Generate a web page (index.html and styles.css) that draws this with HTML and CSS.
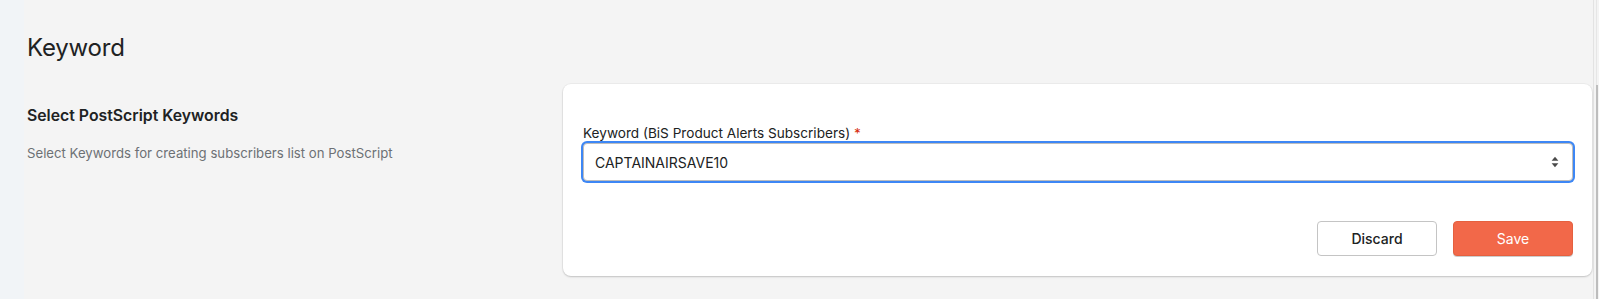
FILE: index.html
```html
<!doctype html>
<html>

<head>
  <meta charset="UTF-8" />
  <title>Keyword settings</title>
  <link rel="stylesheet" href="styles.css">
</head>

<body>
  <div class="app">
    <div class="side-strip"></div>

    <main class="page">
      <h1 class="page-title">Keyword</h1>

      <section class="annotated">
        <div class="annotation">
          <h2 class="annotation-title">Select PostScript Keywords</h2>
          <p class="annotation-text">Select Keywords for creating subscribers list on PostScript</p>
        </div>

        <div class="card">
          <label class="field-label" for="keyword">Keyword (BiS Product Alerts Subscribers) <span class="required">*</span></label>
          <div class="select-wrap">
            <select id="keyword" class="select">
              <option>CAPTAINAIRSAVE10</option>
            </select>
            <svg class="select-arrows" viewBox="0 0 8 12" xmlns="http://www.w3.org/2000/svg">
              <path d="M4,0.8L7.4,4.8H0.6Z" fill="#4A4A4A" />
              <path d="M4,11.2L7.4,7.2H0.6Z" fill="#4A4A4A" />
            </svg>
          </div>

          <div class="actions">
            <button class="btn btn-secondary" type="button">Discard</button>
            <button class="btn btn-primary" type="button">Save</button>
          </div>
        </div>
      </section>
    </main>

    <div class="scroll-gutter">
      <div class="gutter-top"></div>
      <div class="gutter-thumb"></div>
    </div>
  </div>
</body>

</html>
```

FILE: styles.css
```css
html,
body {
  margin: 0;
  padding: 0;
  height: 100%;
}

body {
  background-color: #F4F4F4;
  font-family: Inter, "Noto Sans", "Liberation Sans", sans-serif;
  color: #202223;
  overflow: hidden;
}

.app {
  display: flex;
  height: 299px;
}

.side-strip {
  width: 24px;
  flex: none;
  background-color: #F1F4F7;
}

.page {
  flex: 1;
  padding: 32px 1px 0 3px;
  border-right: 1px solid #E3E3E3;
}

.page-title {
  margin: 0 0 20px 0;
  font-size: 24px;
  line-height: 32px;
  font-weight: 400;
  letter-spacing: -0.2px;
  color: #202223;
}

.annotated {
  display: flex;
  align-items: flex-start;
}

.annotation {
  width: 536px;
  flex: none;
  padding-top: 22px;
}

.annotation-title {
  margin: 0;
  font-size: 15.8px;
  line-height: 20px;
  font-weight: 600;
  color: #202223;
}

.annotation-text {
  margin: 17px 0 0 0;
  font-size: 13.2px;
  line-height: 20px;
  color: #6D7175;
}

.card {
  flex: 1;
  background-color: #FFFFFF;
  border-radius: 8px;
  box-shadow: 0 1px 2px rgba(0, 0, 0, 0.18), 0 0 0 1px rgba(0, 0, 0, 0.03);
  padding: 39px 19px 20px 20px;
}

.field-label {
  display: block;
  font-size: 13.6px;
  line-height: 20px;
  color: #202223;
}

.required {
  color: #D72C0D;
}

.select-wrap {
  position: relative;
}

.select {
  display: block;
  width: 100%;
  height: 38px;
  box-sizing: border-box;
  appearance: none;
  -webkit-appearance: none;
  background-color: #FFFFFF;
  border: 1px solid #BDBDBD;
  border-radius: 4px;
  box-shadow: 0 0 0 2px #3D87F5;
  padding: 0 36px 0 11px;
  font-family: inherit;
  font-size: 14px;
  color: #202223;
  outline: none;
}

.select-arrows {
  position: absolute;
  right: 14px;
  top: 13px;
  width: 8px;
  height: 12px;
  pointer-events: none;
}

.actions {
  display: flex;
  justify-content: flex-end;
  gap: 16px;
  margin-top: 40px;
}

.btn {
  width: 120px;
  height: 35px;
  border-radius: 4px;
  font-family: inherit;
  font-size: 14px;
  font-weight: 500;
  cursor: pointer;
}

.btn-secondary {
  background-color: #FFFFFF;
  border: 1px solid #C4C4C4;
  color: #202223;
}

.btn-primary {
  background-color: #F26849;
  border: 1px solid #E5603F;
  box-shadow: 0 1px 0 rgba(0, 0, 0, 0.2);
  color: #FFFFFF;
  font-weight: 400;
}

.scroll-gutter {
  width: 5px;
  flex: none;
  display: flex;
  flex-direction: column;
  align-items: center;
}

.gutter-top {
  width: 1px;
  height: 85px;
  background-color: #E6E6E6;
}

.gutter-thumb {
  width: 2px;
  flex: 1;
  background-color: #BDBDBD;
}
```
